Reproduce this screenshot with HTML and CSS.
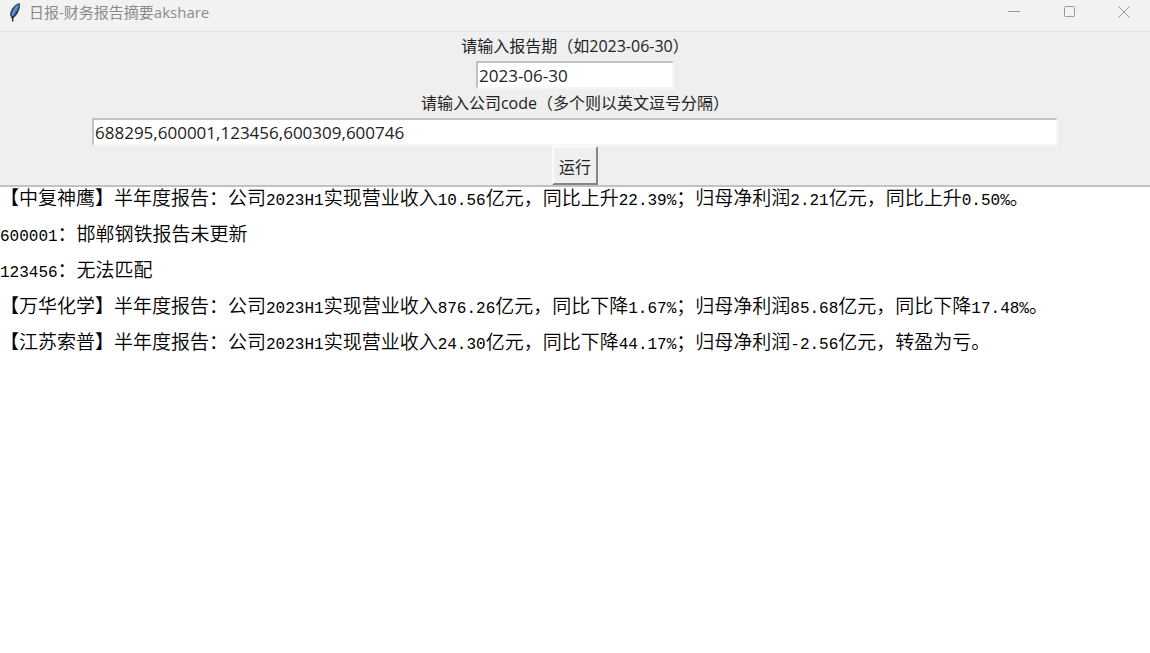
FILE: index.html
```html
<!DOCTYPE html>
<html lang="zh-CN">
<head>
<meta charset="utf-8">
<title>日报-财务报告摘要akshare</title>
<link rel="stylesheet" href="styles.css">
</head>
<body class="window">
<header class="titlebar">
  <svg class="feather" viewBox="0 0 14 20" aria-hidden="true">
    <path d="M11.500 1C7 2 2.500 7 2 13L4 17C8 15 12 9 12 3Z" fill="#2c3948"/>
    <path d="M10.800 2C7 4 4 8 3.500 13L4.500 14.500C8 11 11 7 10.800 2Z" fill="#4584cc"/>
    <path d="M10 3C7 7 5 11 3.800 15" fill="none" stroke="#6fa3dc"/>
    <path d="M4.500 14L4.800 19.500" fill="none" stroke="#20262e" stroke-width="1.400"/>
  </svg>
  <h1 class="title">日报-财务报告摘要akshare</h1>
  <div class="controls">
    <button class="control" type="button" aria-label="最小化"><svg viewBox="0 0 12 12"><path d="M0 5.500H12"/></svg></button>
    <button class="control" type="button" aria-label="最大化"><svg viewBox="0 0 12 12"><rect x=".5" y=".5" width="10" height="10" rx="1"/></svg></button>
    <button class="control" type="button" aria-label="关闭"><svg viewBox="0 0 12 12"><path d="M.5.5L11.500 11.500M11.500.5L.5 11.500"/></svg></button>
  </div>
</header>
<form class="form">
  <label class="label" for="period">请输入报告期（如2023-06-30）</label>
  <input class="entry entry-short" id="period" type="text" value="2023-06-30">
  <label class="label" for="codes">请输入公司code（多个则以英文逗号分隔）</label>
  <input class="entry entry-long" id="codes" type="text" value="688295,600001,123456,600309,600746">
  <button class="run" type="button">运行</button>
</form>
<main class="output">
  <p class="line">【中复神鹰】半年度报告：公司<span class="mono">2023H1</span>实现营业收入<span class="mono">10.56</span>亿元，同比上升<span class="mono">22.39%</span>；归母净利润<span class="mono">2.21</span>亿元，同比上升<span class="mono">0.50%</span>。</p>
  <p class="line"><span class="mono">600001</span>：邯郸钢铁报告未更新</p>
  <p class="line"><span class="mono">123456</span>：无法匹配</p>
  <p class="line">【万华化学】半年度报告：公司<span class="mono">2023H1</span>实现营业收入<span class="mono">876.26</span>亿元，同比下降<span class="mono">1.67%</span>；归母净利润<span class="mono">85.68</span>亿元，同比下降<span class="mono">17.48%</span>。</p>
  <p class="line">【江苏索普】半年度报告：公司<span class="mono">2023H1</span>实现营业收入<span class="mono">24.30</span>亿元，同比下降<span class="mono">44.17%</span>；归母净利润<span class="mono">-2.56</span>亿元，转盈为亏。</p>
</main>
</body>
</html>
```
FILE: styles.css
```css
* {
  box-sizing: border-box;
}

.window {
  display: flex;
  flex-direction: column;
  min-height: 100vh;
  margin: 0;
  background: #efefef;
  color: #222;
  font-family: "Open Sans", "Noto Sans CJK SC", sans-serif;
  text-spacing-trim: space-all;
}

.titlebar {
  display: flex;
  align-items: center;
  height: 32px;
  padding: 0 0 8px 8px;
  background: #f2f2f2;
  border-bottom: 1px solid #e4e4e4;
}

.feather {
  width: 14px;
  height: 20px;
}

.title {
  flex: 1;
  margin: 0 0 0 7px;
  color: #8b8b8b;
  font-size: 15px;
  font-weight: 400;
  line-height: 24px;
}

.controls {
  display: flex;
}

.control {
  display: grid;
  place-items: center;
  width: 56px;
  height: 24px;
  padding: 0;
  border: 0;
  background: none;
}

.control svg {
  width: 12px;
  height: 12px;
  fill: none;
  stroke: #999;
}

.control:last-child {
  width: 52px;
}

.form {
  display: flex;
  flex-direction: column;
  align-items: center;
}

.label {
  font-size: 16px;
  line-height: 29px;
}

.entry {
  height: 28px;
  padding: 0 1px;
  border: 2px solid;
  border-color: #c2c2c2 #f6f6f6 #f6f6f6 #c2c2c2;
  background: #fff;
  color: #222;
  font: inherit;
  font-size: 17px;
}

.entry-short {
  width: 198px;
}

.entry-long {
  width: 84%;
}

.run {
  height: 39px;
  padding: 0 5px;
  border: 2px solid;
  border-color: #fafafa #868686 #868686 #fafafa;
  background: #efefef;
  color: #222;
  font: inherit;
  font-size: 16px;
}

.output {
  flex: 1;
  border-top: 2px solid #c2c2c2;
  background: #fff;
  color: #000;
  font-family: "Noto Sans CJK SC", sans-serif;
  font-size: 19px;
  font-weight: 350;
}

.line {
  margin: 0 0 16px;
  line-height: 20px;
}

.mono {
  font-family: "Liberation Mono", monospace;
  font-size: 16px;
  line-height: 0;
}
```
